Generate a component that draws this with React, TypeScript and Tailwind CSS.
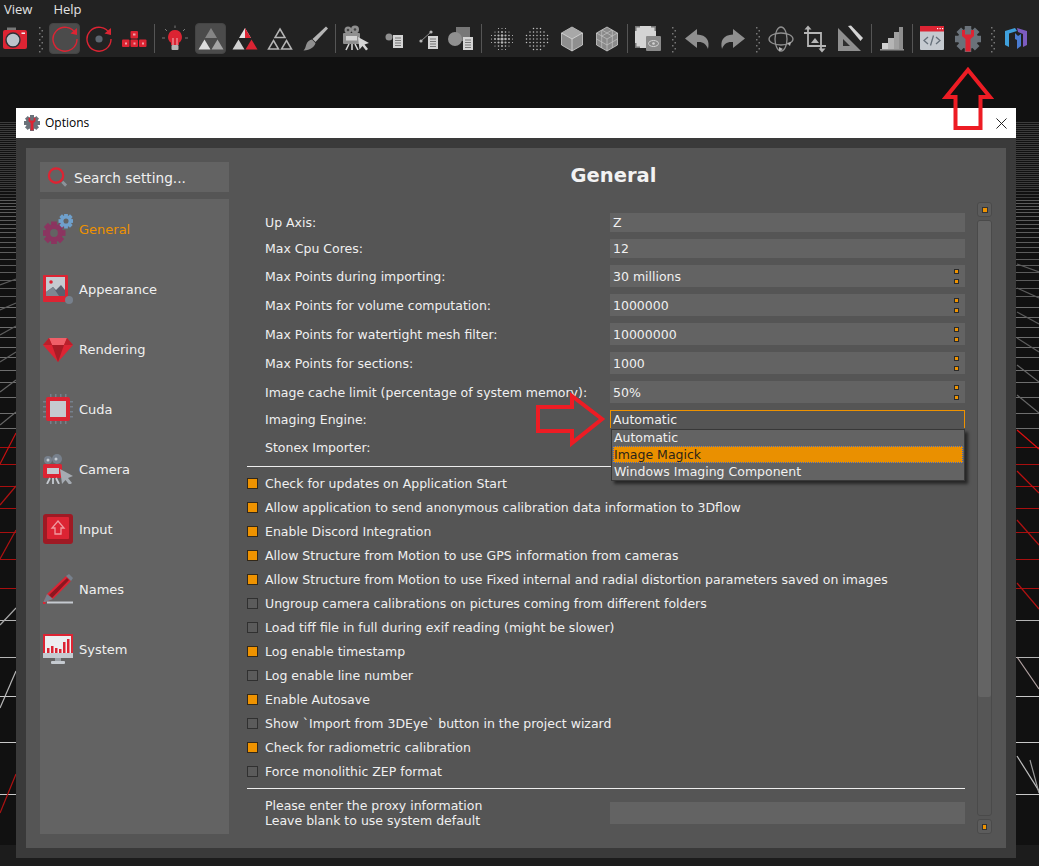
import React from 'react';

const RED = '#dc2433';
const G1 = '#8f8f8f';
const G2 = '#b5b5b5';
const G3 = '#d4d4d4';

const horizontals = [794, 742, 696, 657, 620, 588, 559, 532, 508, 486, 464, 447, 428, 413, 397, 382, 370, 357, 347, 337, 327, 317, 307, 296, 288, 280, 272, 265, 259, 252, 247, 242, 237, 232, 228, 224, 220, 216, 212, 209, 206, 203, 200, 197, 194, 191, 188, 186, 184, 182, 180, 178, 176, 174, 172, 170, 168, 166, 164, 162, 160, 158, 156, 154, 152, 150, 148, 146, 144, 142, 140, 138, 136, 134, 132, 130, 128, 126, 124, 122];

const lineColor = (y: number) => {
  if (y >= 690) return '#c8c8c8';
  if (y >= 600) return '#b4b4b4';
  if (y >= 440) return '#a80f0f';
  if (y >= 300) return '#6e6e6e';
  if (y >= 200) return '#5c5c5c';
  return '#3c3c3c';
};

const diagonals: [number, number, number, number, string][] = [
  [0, 813, 16, 774, '#b01212'],
  [0, 708, 16, 671, '#b8b8b8'],
  [0, 625, 16, 608, '#a8a8a8'],
  [0, 559, 16, 530, '#b01212'],
  [0, 505, 16, 486, '#b01212'],
  [0, 464, 16, 433, '#c81010'],
  [0, 425, 16, 412, '#666'],
  [0, 392, 16, 380, '#666'],
  [0, 362, 16, 352, '#5c5c5c'],
  [0, 335, 16, 326, '#5c5c5c'],
  [0, 310, 16, 303, '#5c5c5c'],
  [0, 285, 16, 279, '#5c5c5c'],
  [1017, 756, 1039, 791, '#c0c0c0'],
  [1017, 657, 1039, 689, '#b0a0a0'],
  [1017, 583, 1039, 609, '#b01212'],
  [1017, 520, 1039, 545, '#b01212'],
  [1017, 471, 1039, 493, '#c01010'],
  [1017, 430, 1039, 449, '#e01010'],
  [1017, 395, 1039, 413, '#666'],
  [1017, 365, 1039, 382, '#666'],
  [1017, 338, 1039, 352, '#5c5c5c'],
  [1017, 312, 1039, 324, '#5c5c5c'],
  [1017, 288, 1039, 298, '#5c5c5c'],
  [1017, 264, 1039, 272, '#5c5c5c'],
  [1030, 760, 1039, 793, '#9a9a9a'],
];

function Gear({ cx, cy, r, fill, hole }: { cx: number; cy: number; r: number; fill: string; hole: string }) {
  return (
    <g>
      {[0, 45, 90, 135, 180, 225, 270, 315].map((a) => (
        <rect
          key={a}
          x={cx - r * 0.25}
          y={cy - r}
          width={r * 0.5}
          height={r * 0.4}
          fill={fill}
          transform={`rotate(${a} ${cx} ${cy})`}
        />
      ))}
      <circle cx={cx} cy={cy} r={r * 0.78} fill={fill} />
      <circle cx={cx} cy={cy} r={r * 0.34} fill={hole} />
    </g>
  );
}

function Icon({ className, children }: { className: string; children: React.ReactNode }) {
  return (
    <svg viewBox="0 0 28 28" className={`w-[28px] h-[28px] shrink-0 ${className}`}>
      {children}
    </svg>
  );
}

function Grip({ className }: { className: string }) {
  return (
    <svg viewBox="0 0 6 28" className={`w-[6px] h-[28px] shrink-0 ${className}`}>
      {[2, 5, 8, 11, 14, 17, 20, 23, 26].map((y, i) => (
        <rect key={y} x={i % 2 ? 3.5 : 1} y={y} width="1.5" height="1.5" fill="#777" />
      ))}
    </svg>
  );
}

function Sep({ className }: { className: string }) {
  return <div className={`w-px h-[29px] bg-[#555] shrink-0 ${className}`} />;
}

function Doc({ x, y }: { x: number; y: number }) {
  return (
    <g>
      <rect x={x} y={y} width="10" height="13" fill={G3} />
      {[2.5, 5, 7.5, 10].map((d) => (
        <rect key={d} x={x + 2} y={y + d} width="6" height="1" fill="#777" />
      ))}
    </g>
  );
}

function DotSphere({ wide }: { wide?: boolean }) {
  const dots: React.ReactNode[] = [];
  for (let i = -3; i <= 3; i++) {
    for (let j = -3; j <= 3; j++) {
      const d = Math.sqrt(i * i + j * j);
      if (d > 3.4) continue;
      const s = wide ? 0.75 : Math.max(0.55, 1.6 - d * 0.35);
      dots.push(<circle key={`${i}-${j}`} cx={14 + i * 3.5} cy={14 + j * 3.5} r={s} fill={d < 2 ? G2 : '#c4c4c4'} />);
    }
  }
  return <>{dots}</>;
}

function RotateArc({ c }: { c: number }) {
  return (
    <>
      <path d={`M${c + 10.8} ${c - 5} A12 12 0 1 0 ${c + 12} ${c}`} fill="none" stroke={RED} strokeWidth="1.4" />
      <path d={`M${c + 5.5} ${c - 5.5} L${c + 12} ${c - 4} L${c + 12} ${c - 11} Z`} fill={RED} />
    </>
  );
}

function OptionsGlyph({ r }: { r: number }) {
  return (
    <>
      <Gear cx={14} cy={14} r={r} fill="#6a727a" hole="#6a727a" />
      <path d="M8 5v6l3.500 3V26.500h5V14L20 11V5h-3v4.500h-6V5Z" fill={RED} />
    </>
  );
}

function Toolbar() {
  return (
    <div className="relative h-[57px] bg-[#222222]">
      <div className="flex h-[20px] items-center text-[13px] text-[#e2e2e2] font-['Open_Sans',sans-serif]">
        <span className="ml-[4px]">View</span>
        <span className="ml-[21px]">Help</span>
      </div>
      <div className="flex h-[31px] mt-[3px] items-center">
        {/* camera */}
        <Icon className="ml-[1px]">
          <rect x="6" y="2.5" width="9" height="4" fill="#777" />
          <rect x="2" y="5" width="24" height="19" rx="2" fill={RED} />
          <circle cx="12" cy="15" r="7" fill="#bcc4cc" stroke="#2d3138" strokeWidth="1.4" />
          <rect x="20.5" y="7.5" width="3.5" height="1.5" fill="#f4f4f4" />
        </Icon>
        <Grip className="ml-[9px]" />
        {/* rotate, active */}
        <div className="ml-[5px] w-[31px] h-[31px] bg-[#4b4b4b] border border-[#444] rounded-sm shrink-0 flex items-center justify-center">
          <svg viewBox="0 0 28 28" className="w-[28px] h-[28px]">
            <RotateArc c={14} />
          </svg>
        </div>
        <Icon className="ml-[5px]">
          <RotateArc c={14} />
          <circle cx="14" cy="14" r="3.6" fill="#5d6670" />
        </Icon>
        {/* keys */}
        <Icon className="ml-[7px]">
          <rect x="10.5" y="6" width="7.5" height="7.5" rx="1" fill={RED} />
          <rect x="2" y="14.5" width="7.5" height="7.5" rx="1" fill={RED} />
          <rect x="10.5" y="14.5" width="7.5" height="7.5" rx="1" fill={RED} />
          <rect x="19" y="14.5" width="7.5" height="7.5" rx="1" fill={RED} />
          <rect x="13" y="8.5" width="2.5" height="2" fill="#f0a0a8" />
          <rect x="5" y="17.5" width="2" height="2" fill="#f0a0a8" />
          <rect x="13.5" y="17.5" width="2" height="2" fill="#f0a0a8" />
          <rect x="22" y="17.5" width="2" height="2" fill="#f0a0a8" />
        </Icon>
        <Sep className="ml-[6px]" />
        {/* bulb */}
        <Icon className="ml-[6px]">
          <path d="M14 5a7 7 0 0 0-4 12.7V20h8v-2.3A7 7 0 0 0 14 5Z" fill={RED} />
          <path d="M12 20v-7m4 7v-7" stroke="#f3c6ca" strokeWidth="0.9" />
          <rect x="10.5" y="20" width="7" height="5" rx="1" fill={G2} />
          <path d="M14 0.5v2.5M4 4l2 2M24 4l-2 2M1 13h3M24 13h3" stroke="#777" strokeWidth="1" />
        </Icon>
        {/* triangles, active */}
        <div className="ml-[6px] w-[31px] h-[31px] bg-[#4b4b4b] border border-[#444] rounded-sm shrink-0 flex items-center justify-center">
          <svg viewBox="0 0 28 28" className="w-[28px] h-[28px]">
            <path d="M14 3l6 10H8Z" fill="#858585" />
            <path d="M7.5 14.5l6 10h-12Z" fill="#dcdcdc" />
            <path d="M20.5 14.5l6 10h-12Z" fill="#a5a5a5" />
          </svg>
        </div>
        <Icon className="ml-[5px]">
          <path d="M14 3l6 10H8Z" fill="#e4e4e4" />
          <path d="M14 3l6 10h-6Z" fill={RED} />
          <path d="M7.5 14.5l6 10h-12Z" fill="#d0d0d0" />
          <path d="M20.5 14.5l6 10h-12Z" fill={RED} />
        </Icon>
        <Icon className="ml-[7px]">
          <g fill="none" stroke={G2} strokeWidth="1.5">
            <path d="M14 4l5 8.5H9Z" />
            <path d="M7.5 15.5l5 8.5h-10Z" />
            <path d="M20.5 15.5l5 8.5h-10Z" />
          </g>
        </Icon>
        {/* brush */}
        <Icon className="ml-[7px]">
          <path d="M25 1.5l2 2L14.5 17l-3-3Z" fill={G2} />
          <path d="M11 14.5l3.5 3.5c-1 4-5 7-12 7.5 2-2 2-4 3-6.5 1-2.500 3-4 5.500-4.500Z" fill={G1} />
        </Icon>
        <Sep className="ml-[6px]" />
        {/* movie camera + cursor */}
        <Icon className="ml-[6px]">
          <circle cx="6" cy="5" r="3.5" fill={G1} />
          <circle cx="13" cy="4.500" r="4" fill={G1} />
          <circle cx="6" cy="5" r="1.3" fill="#444" />
          <circle cx="13" cy="4.500" r="1.3" fill="#444" />
          <rect x="1" y="8" width="17" height="11" rx="1" fill={G1} />
          <rect x="4" y="11" width="11" height="4.500" fill={G3} />
          <path d="M7 19l-3 6M10 19v6M13 19l3 6" stroke={G3} strokeWidth="1.6" />
          <path d="M16 12l11 6-4.500 1.500 3.500 4.500-2 1.500-3.500-4.500-3 3.500Z" fill={G3} />
        </Icon>
        <Icon className="ml-[11px]">
          <circle cx="8" cy="12" r="3.500" fill={G1} />
          <Doc x={12} y={10} />
        </Icon>
        <Icon className="ml-[6px]">
          <path d="M6 16L16 7" stroke={G1} strokeWidth="1" />
          <circle cx="6" cy="16" r="1.600" fill={G2} />
          <circle cx="16" cy="7" r="1.600" fill={G2} />
          <Doc x={13} y={11} />
        </Icon>
        <Icon className="ml-[4px]">
          <rect x="9" y="2" width="14" height="14" fill="#777" />
          <circle cx="8" cy="14" r="7" fill={G1} />
          <Doc x={16} y={12} />
        </Icon>
        <Sep className="ml-[6px]" />
        <Icon className="ml-[6px]">
          <DotSphere />
        </Icon>
        <Icon className="ml-[7px]">
          <DotSphere wide />
        </Icon>
        {/* cube */}
        <Icon className="ml-[7px]">
          <path d="M14 2l10.500 6v12L14 26 3.500 20V8Z" fill={G1} stroke="#e4e4e4" strokeWidth="0.7" />
          <path d="M14 2l10.500 6L14 14 3.500 8Z" fill="#a8a8a8" />
          <path d="M14 14v12M14 14L3.500 8M14 14l10.500-6" stroke="#e4e4e4" strokeWidth="0.7" />
        </Icon>
        <Icon className="ml-[7px]">
          <path d="M14 2l10.500 6v12L14 26 3.500 20V8Z" fill="#8a8a8a" stroke="#ddd" strokeWidth="0.7" />
          <path d="M14 14v12M14 14L3.500 8M14 14l10.500-6M8.700 5v18M19.300 5v18M3.500 14L14 20l10.500-6M9 11l10-6M9 5l10 6" stroke="#cfcfcf" strokeWidth="0.6" fill="none" />
        </Icon>
        <Sep className="ml-[6px]" />
        {/* image + eye */}
        <Icon className="ml-[6px]">
          <rect x="1" y="1" width="21" height="22" rx="1" fill={G3} />
          <path d="M1 1h5v1.500H2.500V6H1ZM22 1v5h-1.500V2.500H17V1ZM1 23v-5h1.500v3.500H6V23Z" fill="#777" />
          <rect x="12" y="11" width="15" height="15" rx="1" fill="#8a8a8a" />
          <ellipse cx="19.500" cy="18.500" rx="5" ry="3" fill="none" stroke={G3} strokeWidth="1" />
          <circle cx="19.500" cy="18.500" r="1.300" fill={G3} />
        </Icon>
        <Grip className="ml-[9px]" />
        {/* undo, redo */}
        <Icon className="ml-[7px]">
          <path d="M13 4L1 13.500 13 23v-6c6-0.500 9 1.500 11 7 2-8-1-14-11-14.500Z" fill={G1} />
        </Icon>
        <Icon className="ml-[6px]">
          <path d="M15 4l12 9.500L15 23v-6c-6-0.500-9 1.500-11 7-2-8 1-14 11-14.500Z" fill={G1} />
        </Icon>
        <Grip className="ml-[9px]" />
        {/* orbit */}
        <Icon className="ml-[6px]">
          <g fill="none" stroke={G1} strokeWidth="1.300">
            <ellipse cx="14" cy="14" rx="6" ry="12" />
            <ellipse cx="14" cy="14" rx="12" ry="6" />
          </g>
          <path d="M12 22l4 2-4 2.500ZM20 18l4-1-1 4Z" fill={G2} />
        </Icon>
        {/* crop */}
        <Icon className="ml-[6px]">
          <path d="M7 4v17h18M3 8h17v17" fill="none" stroke={G2} strokeWidth="1.800" />
          <path d="M7 0.500l3.500 4h-7ZM21 27.500l-3.500-4h7Z" fill={G2} />
          <path d="M10 18l4-5 4 5Z" fill={G2} />
        </Icon>
        {/* set square */}
        <Icon className="ml-[7px]">
          <path d="M2 3l23 23H2Z" fill={G1} />
          <path d="M7 14l7 7H7Z" fill="#2e2e2e" />
          <path d="M12 1l3-0.500L27 13l-2.500 3Z" fill={G3} />
        </Icon>
        <Sep className="ml-[7px]" />
        {/* stairs */}
        <Icon className="ml-[6px]">
          <rect x="4" y="18" width="6" height="6" fill="#d0d0d0" />
          <rect x="10" y="13" width="6" height="11" fill={G2} />
          <rect x="16" y="7" width="5" height="17" fill="#a0a0a0" />
          <rect x="21" y="2" width="4" height="22" fill={G1} />
          <rect x="2" y="24" width="24" height="1.500" fill={G1} />
        </Icon>
        <Sep className="ml-[6px]" />
        {/* code window */}
        <Icon className="ml-[5px]">
          <rect x="0" y="1" width="24" height="24" rx="1" fill="#c5cad0" transform="translate(2 0)" />
          <rect x="2" y="1" width="24" height="5.500" fill={RED} />
          <rect x="19" y="3" width="1.200" height="1.200" fill="#fff" />
          <rect x="21.500" y="3" width="1.200" height="1.200" fill="#fff" />
          <rect x="24" y="3" width="1.200" height="1.200" fill="#fff" />
          <path d="M10 12l-4 3.500 4 3.500M18 12l4 3.500-4 3.500M15.500 10.500l-3 10" fill="none" stroke="#66707a" strokeWidth="1.300" />
        </Icon>
        {/* options gear */}
        <Icon className="ml-[8px]">
          <OptionsGlyph r={13} />
        </Icon>
        <Grip className="ml-[8px]" />
        {/* M logo */}
        <Icon className="ml-[6px]">
          <path d="M3 6l10-3 2 3-8 2.500V22l-4-2Z" fill="#3fa0dc" />
          <path d="M13 8l3 3 3-2v12l-4 3V15l-2-1Z" fill="#4a7bd0" />
          <path d="M15 3l10 3v14l-4 2V9l-5-2Z" fill="#7c5cc0" />
        </Icon>
      </div>
    </div>
  );
}

const sideIcons: Record<string, React.ReactNode> = {
  General: (
    <>
      <Gear cx={11} cy={19} r={11.500} fill="#8b3560" hole="#636363" />
      <Gear cx={23} cy={7} r={7.500} fill="#6fa0cc" hole="#636363" />
    </>
  ),
  Appearance: (
    <>
      <rect x="0" y="1" width="25" height="27" rx="1" fill={RED} />
      <rect x="3" y="3" width="19" height="19" fill="#c5cad0" />
      <path d="M3 22v-4l7-5 3 3 5-5 4 5v6Z" fill="#59606e" />
      <path d="M3 22v-4l7-5 6 9Z" fill="#7e8792" />
      <circle cx="8" cy="8" r="1.800" fill={RED} />
      <circle cx="26" cy="26" r="4" fill="#77808c" />
    </>
  ),
  Rendering: (
    <>
      <path d="M6 4h18l6 7-15 17L0 11Z" fill={RED} />
      <path d="M6 4h18l-3 7H9Z" fill="#ef5f68" />
      <path d="M9 11h12l-6 17Z" fill="#a81c26" />
      <path d="M0 11l6-7 3 7ZM30 11l-6-7-3 7Z" fill="#b8202b" />
    </>
  ),
  Cuda: (
    <>
      <rect x="3" y="3" width="24" height="24" rx="2" fill={RED} />
      <rect x="7" y="7" width="16" height="16" fill="#c5cad0" />
      {[7, 12, 17, 22].map((p) => (
        <g key={p} fill="#77808c">
          <rect x={p} y="0" width="1.500" height="3" />
          <rect x={p} y="27" width="1.500" height="3" />
          <rect x="0" y={p} width="3" height="1.500" />
          <rect x="27" y={p} width="3" height="1.500" />
        </g>
      ))}
    </>
  ),
  Camera: (
    <>
      <circle cx="5" cy="6" r="4" fill="#77808c" />
      <circle cx="14" cy="5" r="5" fill="#77808c" />
      <circle cx="5" cy="6" r="1.500" fill="#c5cad0" />
      <circle cx="13" cy="5" r="1.500" fill="#c5cad0" />
      <rect x="0" y="10" width="19" height="14" rx="1.500" fill={RED} />
      <rect x="4" y="14" width="12" height="6" fill="#c5cad0" />
      <path d="M7 24l-3 6M10 24v6M13 24l3 6" stroke="#c5cad0" strokeWidth="1.800" />
      <path d="M17 15l13 7-5 2 4 5-2.500 2-4-5-3.500 4Z" fill="#a5abb2" />
    </>
  ),
  Input: (
    <>
      <rect x="0" y="0" width="30" height="30" rx="3" fill="#9e1a24" />
      <rect x="4" y="3" width="22" height="22" rx="1" fill={RED} />
      <path d="M15 7l6 7h-3v6h-6v-6H9Z" fill="none" stroke="#ef9aa0" strokeWidth="1.300" />
    </>
  ),
  Names: (
    <>
      <path d="M0 29l4-9L23 2l5 5L10 25Z" fill={RED} />
      <path d="M6 21L24 4l2 2L9 24Z" fill="#8c1620" />
      <path d="M23 2l3-2 4 4-2 3Z" fill="#77808c" />
      <path d="M0 29l4-9 6 5Z" fill="#77808c" />
      <rect x="4" y="27.500" width="26" height="2" fill="#c5cad0" />
      <rect x="0" y="28" width="2.500" height="2" fill={RED} />
    </>
  ),
  System: (
    <>
      <rect x="0" y="0" width="30" height="24" fill={RED} />
      <rect x="2" y="2" width="26" height="17" fill="#eceef0" />
      <path d="M4 19v-5h2.500v5ZM8 19v-7h2.500v7ZM12 19v-5h2.500v5ZM16 19v-4h2.500v4ZM20 19V8h2.500v11ZM24 19V5h2.500v14Z" fill={RED} />
      <rect x="0" y="19" width="30" height="5" fill="#c5cad0" />
      <rect x="12" y="24" width="6" height="3" fill="#9aa0a6" />
      <rect x="8" y="27" width="14" height="3" rx="1" fill="#c5cad0" />
    </>
  ),
};

const fields: { label: string; value: string; spin?: boolean }[] = [
  { label: 'Up Axis:', value: 'Z' },
  { label: 'Max Cpu Cores:', value: '12' },
  { label: 'Max Points during importing:', value: '30 millions', spin: true },
  { label: 'Max Points for volume computation:', value: '1000000', spin: true },
  { label: 'Max Points for watertight mesh filter:', value: '10000000', spin: true },
  { label: 'Max Points for sections:', value: '1000', spin: true },
  { label: 'Image cache limit (percentage of system memory):', value: '50%', spin: true },
];

const checks: [string, boolean][] = [
  ['Check for updates on Application Start', true],
  ['Allow application to send anonymous calibration data information to 3Dflow', true],
  ['Enable Discord Integration', true],
  ['Allow Structure from Motion to use GPS information from cameras', true],
  ['Allow Structure from Motion to use Fixed internal and radial distortion parameters saved on images', true],
  ['Ungroup camera calibrations on pictures coming from different folders', false],
  ['Load tiff file in full during exif reading (might be slower)', false],
  ['Log enable timestamp', true],
  ['Log enable line number', false],
  ['Enable Autosave', true],
  ['Show `Import from 3DEye` button in the project wizard', false],
  ['Check for radiometric calibration', true],
  ['Force monolithic ZEP format', false],
];

function Dot() {
  return <span className="block w-[5px] h-[5px] bg-[#ef9300] border border-[#2b2b2b]" />;
}

function Options() {
  return (
    <div className="relative ml-[16px] mt-[51px] w-[1000px]">
      <div className="h-[30px] bg-white flex items-center">
        <svg viewBox="0 0 28 28" className="ml-[8px] w-[16px] h-[16px]">
          <OptionsGlyph r={14} />
        </svg>
        <span className="ml-[5px] text-[12px] text-black font-['Open_Sans',sans-serif]">Options</span>
        <svg viewBox="0 0 12 12" className="ml-auto mr-[9px] w-[11px] h-[11px]">
          <path d="M0.500 0.500l11 11M11.500 0.500l-11 11" stroke="#111" strokeWidth="1" />
        </svg>
      </div>
      <div className="h-[720px] bg-[#3a3a3a] px-[10px] pt-[10px]">
        <div className="h-[700px] bg-[#555555] flex pl-[14px] pt-[14px]">
          {/* sidebar */}
          <div className="w-[189px] shrink-0">
            <div className="h-[30px] bg-[#636363] flex items-center text-[#f0f0f0]">
              <svg viewBox="0 0 22 22" className="ml-[7px] w-[21px] h-[21px]">
                <circle cx="9.500" cy="9" r="7.500" fill="none" stroke={RED} strokeWidth="2.400" />
                <path d="M16 15.500l4 4" stroke="#8c939a" strokeWidth="3" />
              </svg>
              <span className="ml-[6px] mt-[2px] text-[13.7px]">Search setting...</span>
            </div>
            <div className="mt-[7px] h-[635px] bg-[#636363]">
              {Object.keys(sideIcons).map((name) => (
                <div key={name} className="h-[60px] flex items-center">
                  <svg viewBox="0 0 30 30" className="ml-[3px] w-[30px] h-[30px] shrink-0">
                    {sideIcons[name]}
                  </svg>
                  <span className={`ml-[6px] mt-[2px] text-[13px] ${name === 'General' ? 'text-[#ee9200]' : 'text-[#f0f0f0]'}`}>
                    {name}
                  </span>
                </div>
              ))}
            </div>
          </div>

          {/* settings */}
          <div className="ml-[18px] w-[718px] shrink-0 text-[12.5px] leading-[18px] text-[#f0f0f0]">
            <div className="w-[733px] h-[26px] pt-[2px] flex items-center justify-center text-[19.5px] leading-none font-bold text-[#f2f2f2]">
              General
            </div>
            <div className="mt-[25px] flex flex-col gap-[7px]">
              {fields.map((f, i) => (
                <div key={f.label} className="flex items-center">
                  <span className={`pl-[18px] w-[363px] shrink-0 whitespace-nowrap ${i < 2 ? '' : 'translate-y-px'}`}>{f.label}</span>
                  <div className={`flex-1 bg-[#636363] pl-[3px] pr-[6px] flex items-center justify-between ${i < 2 ? 'h-[19px]' : 'h-[22px]'}`}>
                    <span className={i < 2 ? '' : 'translate-y-px'}>{f.value}</span>
                    {f.spin && (
                      <span className="flex flex-col gap-[5px]">
                        <Dot />
                        <Dot />
                      </span>
                    )}
                  </div>
                </div>
              ))}
              <div className="flex items-center">
                <span className="pl-[18px] w-[363px] shrink-0 translate-y-px">Imaging Engine:</span>
                <div className="relative flex-1 h-[18px] border border-[#ee9200] border-b-0 pl-[2px] flex items-center">
                  <span>Automatic</span>
                  {/* open combo list */}
                  <div className="absolute z-10 left-0 top-[18px] w-[354px] h-[52px] bg-[#636363] border border-[#383838] shadow-[3px_3px_3px_rgba(0,0,0,0.55)] flex flex-col">
                    <div className="h-[16px] pl-[2px] flex items-center">Automatic</div>
                    <div className="h-[17px] mx-px pl-px flex items-center bg-[#ea9000] text-[#2b2418] outline-dotted outline-1 -outline-offset-1 outline-[#3a66c4]">Image Magick</div>
                    <div className="h-[17px] pl-[2px] flex items-center">Windows Imaging Component</div>
                  </div>
                </div>
              </div>
              <div className="flex items-center h-[18px] mt-[3px]">
                <span className="pl-[18px] translate-y-px">Stonex Importer:</span>
              </div>
            </div>
            <div className="mt-[10px] h-px bg-[#eeeeee]" />
            <div className="mt-[4px]">
              {checks.map(([label, on]) => (
                <div key={label} className="h-[24px] flex items-center">
                  <span className={`block w-[11px] h-[11px] border ${on ? 'bg-[#ef9300] border-[#33291a]' : 'bg-[#5b5b5b] border-[#303030]'}`} />
                  <span className="ml-[7px] whitespace-nowrap translate-y-px">{label}</span>
                </div>
              ))}
            </div>
            <div className="mt-[5px] h-px bg-[#eeeeee]" />
            <div className="mt-[13px] flex items-start">
              <div className="pl-[18px] w-[363px] shrink-0 leading-[15px] -mt-[4px]">
                <div>Please enter the proxy information</div>
                <div>Leave blank to use system default</div>
              </div>
              <div className="flex-1 h-[22px] bg-[#636363]" />
            </div>
          </div>

          {/* scrollbar */}
          <div className="ml-[12px] mt-[40px] w-[15px] shrink-0 flex flex-col">
            <div className="h-[15px] bg-[#5c5c5c] border border-[#4a4a4a] rounded-[3px] flex items-center justify-center">
              <span className="block w-[6px] h-[6px] bg-[#ef9300] border border-[#333]" />
            </div>
            <div className="mt-[3px] h-[596px] border border-[#4a4a4a] rounded-[3px] bg-[#565656]">
              <div className="h-[476px] bg-[#646464] rounded-[2px]" />
            </div>
            <div className="mt-[3px] h-[15px] bg-[#5c5c5c] border border-[#4a4a4a] rounded-[3px] flex items-center justify-center">
              <span className="block w-[5px] h-[6px] bg-[#ef9300] border border-[#333]" />
            </div>
          </div>
        </div>
      </div>
    </div>
  );
}

export default function App() {
  return (
    <div className="relative w-[1039px] h-[866px] overflow-hidden bg-[#111111] font-['DejaVu_Sans',sans-serif]">
      {/* 3D viewport behind the dialog */}
      <svg className="absolute inset-0 w-[1039px] h-[866px]" viewBox="0 0 1039 866">
        {horizontals.map((y) => (
          <line key={y} x1="0" x2="1039" y1={y + 0.5} y2={y + 0.5} stroke={lineColor(y)} strokeWidth="1" />
        ))}
        {diagonals.map(([x1, y1, x2, y2, c], i) => (
          <line key={i} x1={x1} y1={y1} x2={x2} y2={y2} stroke={c} strokeWidth="1.200" />
        ))}
        <rect x="0" y="845" width="1039" height="21" fill="#1c1c1c" />
      </svg>
      <Toolbar />
      <Options />
      {/* red callout arrows pasted over the shot */}
      <svg className="absolute inset-0 w-[1039px] h-[866px] z-20 pointer-events-none" viewBox="0 0 1039 866">
        <path d="M968 70L990 97H980.500V128H955.500V97H946Z" fill="none" stroke="#ed1c24" strokeWidth="4" />
        <path d="M538 407H572V396L602 419 572 443V431H538Z" fill="none" stroke="#ed1c24" strokeWidth="4" />
      </svg>
    </div>
  );
}
